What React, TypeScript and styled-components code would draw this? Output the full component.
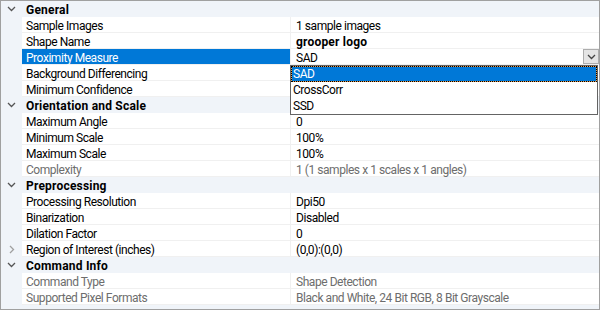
import React from "react";
import styled, { createGlobalStyle } from "styled-components";

const Global = createGlobalStyle`
  html, body { margin: 0; padding: 0; background: #fff; }
  body { font-family: Roboto, "Liberation Sans", Arial, sans-serif; }
`;

const Frame = styled.div`
  position: relative;
  width: 600px;
  height: 310px;
  box-sizing: border-box;
  border: 1px solid #a0a0a0;
  background: #f0f4f9;
  overflow: hidden;
  font-size: 12px;
  letter-spacing: -0.45px;
  color: #000;
`;

const Grid = styled.div`
  display: flex;
  flex-direction: column;
`;

const Row = styled.div`
  display: flex;
  height: 16px;
`;

const Gutter = styled.div`
  width: 21px;
  flex: none;
  display: flex;
  align-items: center;
  justify-content: center;
  background: #f0f4f9;
`;

const CatLabel = styled.div`
  flex: 1;
  padding-left: 4px;
  font-weight: bold;
  font-size: 12px;
  letter-spacing: 0.2px;
  line-height: 18px;
  background: #f0f4f9;
`;

const NameCell = styled.div<{ $sel?: boolean; $dim?: boolean }>`
  width: 269px;
  height: 16px;
  box-sizing: border-box;
  flex: none;
  padding-left: 4px;
  line-height: 18px;
  border-bottom: 1px solid #f0f0f0;
  border-right: 1px solid #f0f0f0;
  background: ${(p) => (p.$sel ? "#0078d7" : "#fff")};
  color: ${(p) => (p.$sel ? "#fff" : p.$dim ? "#6d6d6d" : "#000")};
  white-space: nowrap;
`;

const ValueCell = styled.div<{ $bold?: boolean; $dim?: boolean }>`
  flex: 1;
  height: 16px;
  box-sizing: border-box;
  display: flex;
  align-items: flex-start;
  padding-left: 5px;
  line-height: 18px;
  border-bottom: 1px solid #f0f0f0;
  background: #fff;
  font-weight: ${(p) => (p.$bold ? "bold" : "normal")};
  letter-spacing: ${(p) => (p.$bold ? "0.2px" : "inherit")};
  color: ${(p) => (p.$dim ? "#6d6d6d" : "#000")};
  white-space: nowrap;
`;

const ValueText = styled.span`
  flex: 1;
`;

const DropButton = styled.div`
  width: 16px;
  height: 15px;
  box-sizing: border-box;
  border: 1px solid #adadad;
  background: #e5e5e5;
  display: flex;
  align-items: center;
  justify-content: center;
`;

const DropList = styled.div`
  position: absolute;
  left: 289px;
  top: 64px;
  width: 308px;
  height: 50px;
  box-sizing: border-box;
  border: 1px solid #646464;
  background: #fff;
  display: flex;
  flex-direction: column;
`;

const Item = styled.div<{ $sel?: boolean }>`
  position: relative;
  height: 16px;
  line-height: 17px;
  padding-left: 2px;
  background: ${(p) => (p.$sel ? "#0078d7" : "#fff")};
  color: ${(p) => (p.$sel ? "#fff" : "#000")};
  box-shadow: ${(p) => (p.$sel ? "inset 0 0 0 1px #e09a50" : "none")};
  &::after {
    content: "";
    display: ${(p) => (p.$sel ? "block" : "none")};
    position: absolute;
    inset: 0;
    border: 1px dotted #000;
  }
`;

const Down = ({ color = "#555" }: { color?: string }) => (
  <svg width="9" height="6" viewBox="0 0 9 6">
    <path d="M1 1 L4.5 4.5 L8 1" fill="none" stroke={color} strokeWidth="1.3" />
  </svg>
);

const Right = () => (
  <svg width="6" height="9" viewBox="0 0 6 9">
    <path d="M1 1 L4.5 4.5 L1 8" fill="none" stroke="#a0a0a0" strokeWidth="1.3" />
  </svg>
);

type Prop = {
  name: string;
  value: string;
  dim?: boolean;
  bold?: boolean;
  sel?: boolean;
  collapsed?: boolean;
};

type Cat = { title: string; props: Prop[] };

const data: Cat[] = [
  {
    title: "General",
    props: [
      { name: "Sample Images", value: "1 sample images" },
      { name: "Shape Name", value: "grooper logo", bold: true },
      { name: "Proximity Measure", value: "SAD", sel: true },
      { name: "Background Differencing", value: "" },
      { name: "Minimum Confidence", value: "" },
    ],
  },
  {
    title: "Orientation and Scale",
    props: [
      { name: "Maximum Angle", value: "0" },
      { name: "Minimum Scale", value: "100%" },
      { name: "Maximum Scale", value: "100%" },
      { name: "Complexity", value: "1 (1 samples x 1 scales x 1 angles)", dim: true },
    ],
  },
  {
    title: "Preprocessing",
    props: [
      { name: "Processing Resolution", value: "Dpi50" },
      { name: "Binarization", value: "Disabled" },
      { name: "Dilation Factor", value: "0" },
      { name: "Region of Interest (inches)", value: "(0,0):(0,0)", collapsed: true },
    ],
  },
  {
    title: "Command Info",
    props: [
      { name: "Command Type", value: "Shape Detection", dim: true },
      { name: "Supported Pixel Formats", value: "Black and White, 24 Bit RGB, 8 Bit Grayscale", dim: true },
    ],
  },
];

export default function App() {
  return (
    <>
      <Global />
      <Frame>
        <Grid>
          {data.map((cat) => (
            <React.Fragment key={cat.title}>
              <Row>
                <Gutter>
                  <Down />
                </Gutter>
                <CatLabel>{cat.title}</CatLabel>
              </Row>
              {cat.props.map((p) => (
                <Row key={p.name}>
                  <Gutter>{p.collapsed ? <Right /> : null}</Gutter>
                  <NameCell $sel={p.sel} $dim={p.dim}>
                    {p.name}
                  </NameCell>
                  <ValueCell $bold={p.bold} $dim={p.dim}>
                    <ValueText>{p.value}</ValueText>
                    {p.sel ? (
                      <DropButton>
                        <Down color="#444" />
                      </DropButton>
                    ) : null}
                  </ValueCell>
                </Row>
              ))}
            </React.Fragment>
          ))}
        </Grid>
        <DropList>
          <Item $sel>SAD</Item>
          <Item>CrossCorr</Item>
          <Item>SSD</Item>
        </DropList>
      </Frame>
    </>
  );
}
